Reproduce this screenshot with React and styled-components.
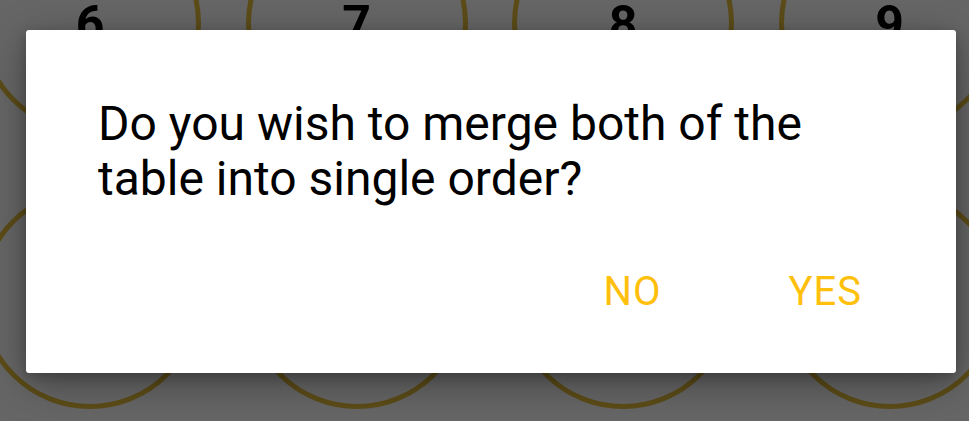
import React from "react";
import styled, { createGlobalStyle } from "styled-components";

const GlobalStyle = createGlobalStyle`
  html, body {
    margin: 0;
    padding: 0;
    background: #ffffff;
  }
  * {
    box-sizing: border-box;
  }
`;

const Screen = styled.div`
  position: relative;
  width: 969px;
  height: 421px;
  overflow: hidden;
  background: #ffffff;
  font-family: Roboto, "Noto Sans", sans-serif;
`;

const TableGrid = styled.div`
  display: grid;
  grid-template-columns: repeat(4, 222px);
  column-gap: 44.5px;
  row-gap: 53px;
  margin-left: -21px;
  margin-top: -88px;
`;

const Table = styled.div`
  width: 222px;
  height: 222px;
  border-radius: 50%;
  border: 5px solid #e6bd3c;
  display: flex;
  align-items: center;
  justify-content: center;
  padding-top: 2px;
  font-family: Roboto, "Noto Sans", sans-serif;
  font-weight: 700;
  font-size: 50px;
  color: #000;
`;

const Scrim = styled.div`
  position: absolute;
  inset: 0;
  background: rgba(0, 0, 0, 0.6);
  padding: 30px 13px 0 26px;
`;

const Dialog = styled.div`
  width: 930px;
  height: 343px;
  background: #ffffff;
  border-radius: 3px;
  box-shadow: 0 10px 40px rgba(0, 0, 0, 0.35), 0 4px 12px rgba(0, 0, 0, 0.2);
  display: flex;
  flex-direction: column;
  padding: 66px 72px 0 72px;
`;

const Message = styled.p`
  margin: 0;
  font-size: 48px;
  line-height: 55px;
  color: #000;
  letter-spacing: 0;
`;

const Actions = styled.div`
  display: flex;
  justify-content: flex-end;
  gap: 127px;
  margin-top: 62px;
  padding-right: 22px;
`;

const ActionButton = styled.button`
  border: none;
  background: none;
  padding: 0;
  font-family: Roboto, "Noto Sans", sans-serif;
  font-size: 40px;
  line-height: 48px;
  letter-spacing: 1px;
  color: #ffbf0d;
  text-transform: uppercase;
  cursor: pointer;
`;

const tables = [6, 7, 8, 9, 10, 11, 12, 13];

export default function App() {
  return (
    <Screen>
      <GlobalStyle />
      <TableGrid>
        {tables.map((n) => (
          <Table key={n}>{n}</Table>
        ))}
      </TableGrid>
      <Scrim>
        <Dialog>
          <Message>
            Do you wish to merge both of the
            <br />
            table into single order?
          </Message>
          <Actions>
            <ActionButton>No</ActionButton>
            <ActionButton>Yes</ActionButton>
          </Actions>
        </Dialog>
      </Scrim>
    </Screen>
  );
}
